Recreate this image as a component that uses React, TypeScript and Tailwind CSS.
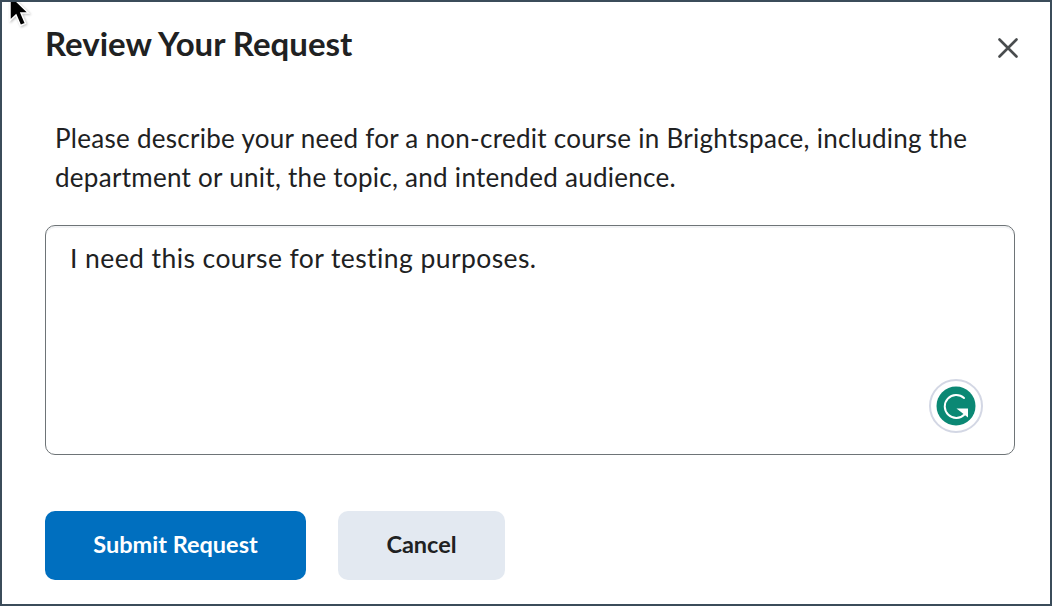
export default function App() {
  return (
    <div className="relative flex h-[606px] w-[1052px] flex-col overflow-hidden border-2 border-[#3b4c5a] bg-white pl-[43px] pr-[35px] font-['Lato',sans-serif] text-[#202122]">
      <div className="flex h-[86px] items-start justify-between">
        <h1 className="mt-[20px] text-[33px] leading-[42px] font-bold">Review Your Request</h1>
        <svg className="mt-[35px] mr-[-4px]" width="22" height="22" viewBox="0 0 22 22" fill="none" stroke="#494c4e" strokeWidth="2.6" strokeLinecap="round">
          <path d="M2.5 2.5 19.5 19.5M19.5 2.5 2.5 19.5" />
        </svg>
      </div>
      <p className="mt-[31px] pl-[10px] text-[26px] leading-[39px] tracking-[0.28px]">
        Please describe your need for a non-credit course in Brightspace, including the<br />
        department or unit, the topic, and intended audience.
      </p>
      <div className="relative mt-[28px] h-[230px] w-[970px] rounded-[10px] border border-[#6e7477] bg-white pt-[13px] pl-[24px] text-[26.5px] leading-[38px] tracking-[0.42px] shadow-[inset_0_2px_0_#f2f3f5]">
        I need this course for testing purposes.
        <div className="absolute top-[153px] left-[883px] flex h-[54px] w-[54px] items-center justify-center rounded-full border-2 border-[#d3d7e4] bg-white">
          <svg width="40" height="40" viewBox="0 0 40 40" fill="none">
            <circle cx="20" cy="20" r="19.5" fill="#0b8874" />
            <path d="M28 12A11.5 11.5 0 1 0 28.5 28.5" stroke="#fff" strokeWidth="2" strokeLinecap="round" />
            <path d="M20.5 22.5H32V31.5Z" fill="#fff" />
          </svg>
        </div>
      </div>
      <div className="mt-[56px] flex gap-[32px]">
        <button className="h-[69px] w-[261px] rounded-[10px] bg-[#006fbf] pb-[2px] text-[23.5px] font-bold text-white">Submit Request</button>
        <button className="h-[69px] w-[167px] rounded-[10px] bg-[#e3e9f1] pb-[2px] text-[23.5px] font-bold text-[#202122]">Cancel</button>
      </div>
      <svg className="absolute top-[-8px] left-[5px] drop-shadow-[1px_1px_1px_rgba(0,0,0,0.25)]" width="28" height="38" viewBox="0 0 28 38">
        <path d="M3 1V26.5L9 21 13.5 31.5 18.5 29.4 14 19H21.5Z" fill="#000" stroke="#fff" strokeWidth="1.5" />
      </svg>
    </div>
  );
}
